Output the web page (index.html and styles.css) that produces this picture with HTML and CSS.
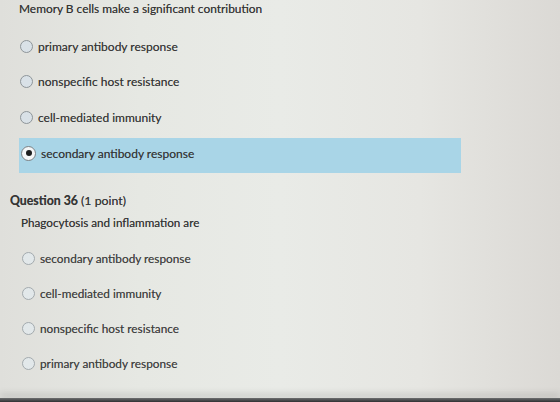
FILE: index.html
```html
<!DOCTYPE html>
<html lang="en">
<head>
<meta charset="utf-8">
<title>Quiz</title>
<link rel="stylesheet" href="styles.css">
</head>
<body>
<main class="quiz">
  <section class="question q-first">
    <p class="prompt prompt-top">Memory B cells make a significant contribution</p>
    <ul class="choices">
      <li class="choice"><span class="radio"></span><span class="label">primary antibody response</span></li>
      <li class="choice"><span class="radio"></span><span class="label">nonspecific host resistance</span></li>
      <li class="choice"><span class="radio"></span><span class="label">cell-mediated immunity</span></li>
      <li class="choice selected"><span class="radio checked"></span><span class="label">secondary antibody response</span></li>
    </ul>
  </section>
  <section class="question q-second">
    <h2 class="q-title"><strong>Question 36</strong> (1 point)</h2>
    <p class="prompt">Phagocytosis and inflammation are</p>
    <ul class="choices">
      <li class="choice"><span class="radio"></span><span class="label">secondary antibody response</span></li>
      <li class="choice"><span class="radio"></span><span class="label">cell-mediated immunity</span></li>
      <li class="choice"><span class="radio"></span><span class="label">nonspecific host resistance</span></li>
      <li class="choice"><span class="radio"></span><span class="label">primary antibody response</span></li>
    </ul>
  </section>
</main>
<div class="bezel"></div>
</body>
</html>
```
FILE: styles.css
```css
html, body {
  margin: 0;
  padding: 0;
  height: 100%;
}
body {
  font-family: Lato, "Open Sans", sans-serif;
  color: #353535;
  background: linear-gradient(90deg, #dfdfdb 0%, #e6e8e3 25%, #e9ebe7 50%, #e6e6e2 75%, #dbd9d5 100%);
  display: flex;
  flex-direction: column;
  overflow: hidden;
}
.quiz {
  flex: 1;
}
.prompt {
  margin: 0;
  font-size: 11.9px;
  line-height: 16px;
  text-shadow: 0 0 0.4px rgba(40, 40, 40, 0.6);
}
.prompt-top {
  padding: 1px 0 0 19px;
}
.choices {
  list-style: none;
  margin: 0;
  padding: 0;
}
.choice {
  display: flex;
  align-items: center;
  gap: 5px;
  height: 35.5px;
  font-size: 12px;
  padding-left: 20px;
  width: 441px;
  box-sizing: border-box;
  text-shadow: 0 0 0.4px rgba(40, 40, 40, 0.5);
}
.q-first .choices {
  padding-top: 12px;
}
.q-first .choice:first-child {
  height: 35px;
}
.choice.selected {
  background: #a9d5e7;
  margin-top: 3px;
  margin-left: 19px;
  padding-left: 2px;
  padding-bottom: 5px;
  width: 442px;
  height: 35px;
}
.radio {
  width: 13px;
  height: 13px;
  border-radius: 50%;
  border: 1px solid #8e9599;
  background: #d9e1e7;
  box-sizing: border-box;
  flex: none;
  position: relative;
}
.radio.checked {
  width: 15px;
  height: 15px;
  background: #f4f6f7;
  border-color: #7a8084;
}
.radio.checked::after {
  content: "";
  position: absolute;
  left: 3.5px;
  top: 3.5px;
  width: 6px;
  height: 6px;
  border-radius: 50%;
  background: #1d1d1d;
}
.q-second {
  padding-top: 20px;
}
.q-title {
  margin: 0;
  padding-left: 10px;
  font-size: 12.3px;
  font-weight: normal;
  line-height: 16px;
  text-shadow: 0 0 0.4px rgba(40, 40, 40, 0.6);
}
.q-title strong {
  font-weight: bold;
}
.q-second .prompt {
  padding: 5px 0 0 21px;
  font-size: 11.7px;
}
.q-second .choices {
  padding-top: 11px;
}
.q-second .choice {
  padding-left: 22px;
  height: 35px;
  font-size: 11.8px;
}
.q-second .radio {
  background: #e2e8ea;
  border-color: #a3aaae;
}
.q-second .label {
  color: #404040;
}
.bezel {
  height: 4px;
  background: linear-gradient(180deg, #6e6f70, #2f3032);
  box-shadow: 0 -4px 6px rgba(90, 90, 90, 0.25);
}
```
